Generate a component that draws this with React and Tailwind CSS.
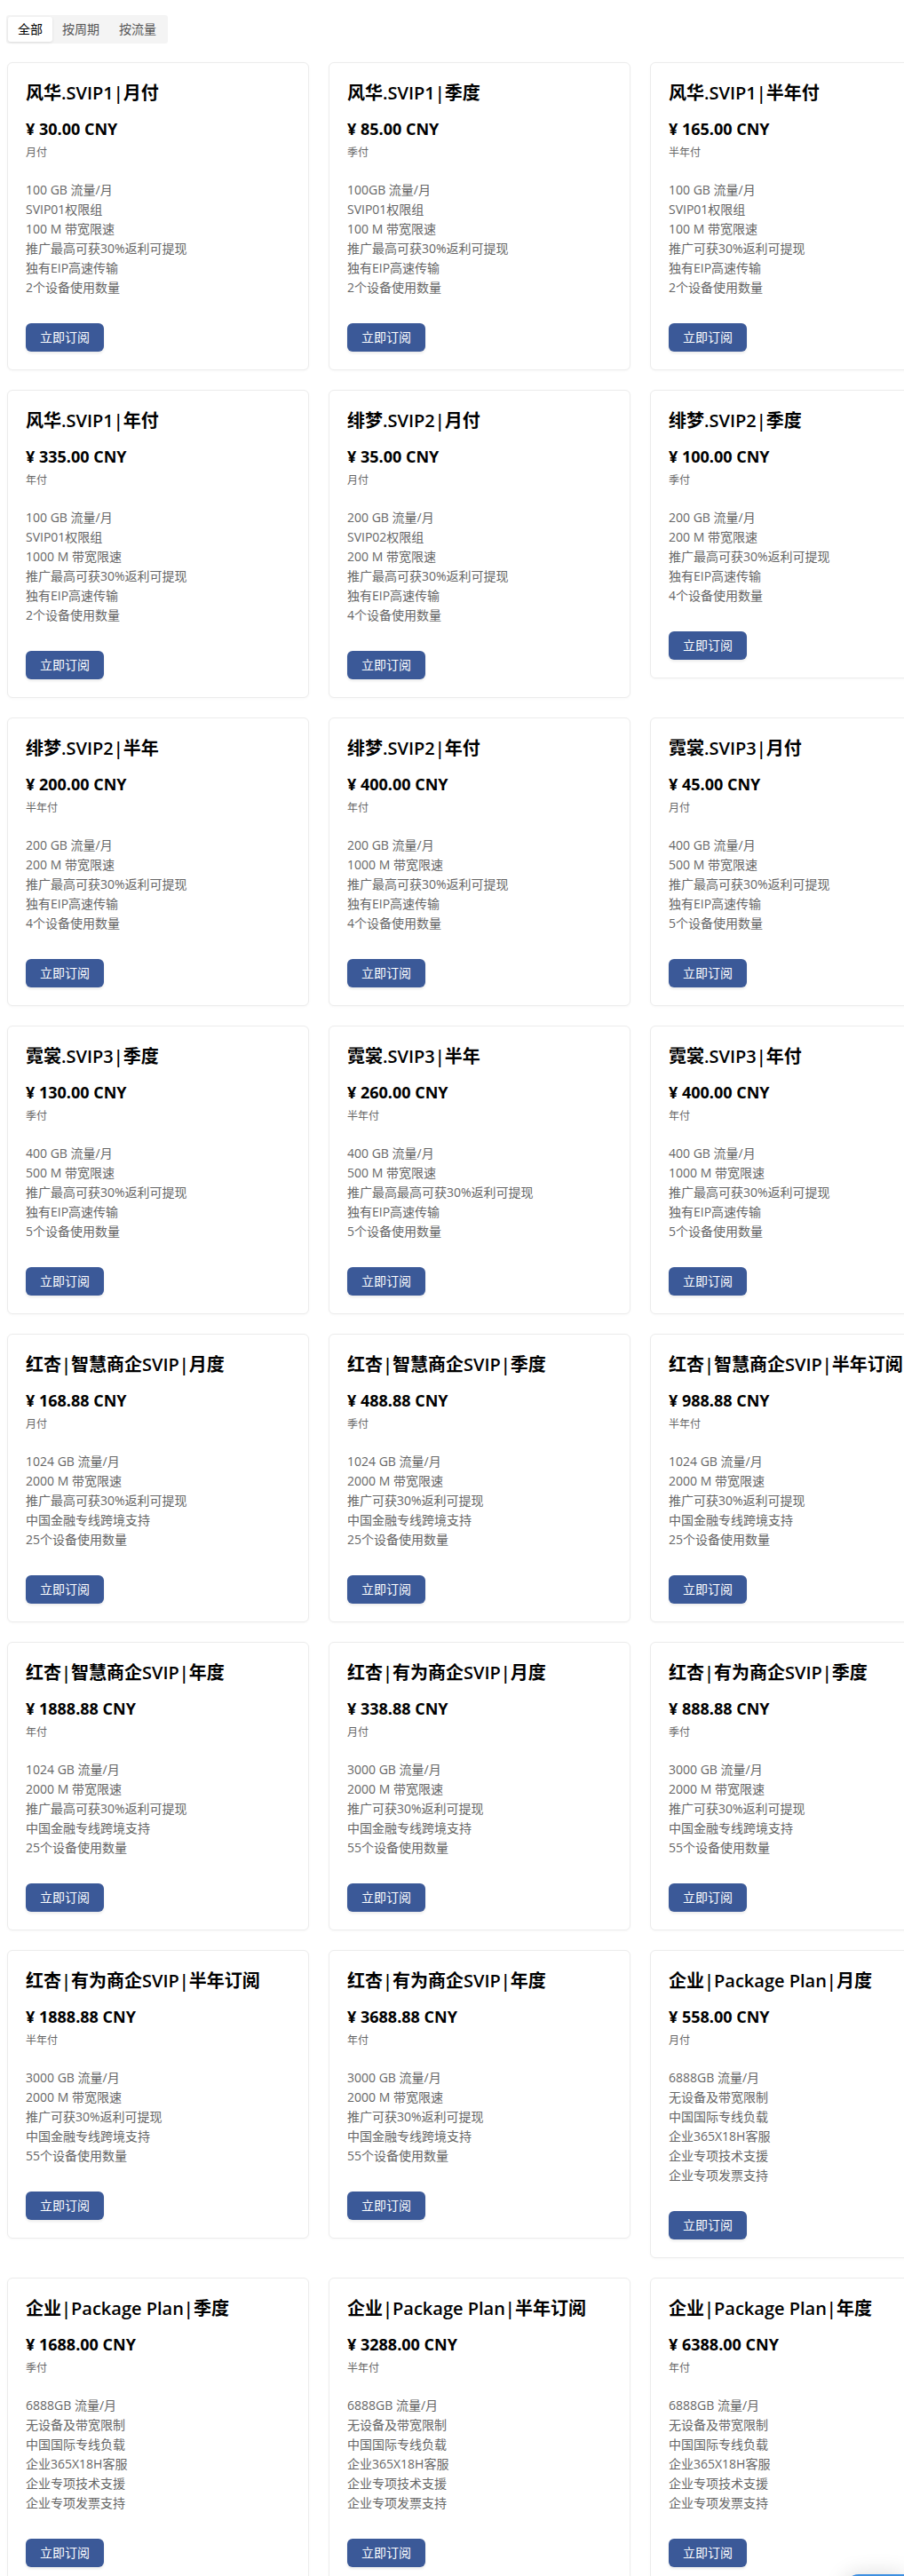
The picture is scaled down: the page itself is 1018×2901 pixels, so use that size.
import { useState } from 'react'

const svip1 = ['SVIP01权限组']
const plans = [
  {
    name: '风华.SVIP1|月付', price: '30.00', cycle: '月付',
    features: ['100 GB 流量/月', ...svip1, '100 M 带宽限速', '推广最高可获30%返利可提现', '独有EIP高速传输', '2个设备使用数量']
  },
  {
    name: '风华.SVIP1|季度', price: '85.00', cycle: '季付',
    features: ['100GB 流量/月', ...svip1, '100 M 带宽限速', '推广最高可获30%返利可提现', '独有EIP高速传输', '2个设备使用数量']
  },
  {
    name: '风华.SVIP1|半年付', price: '165.00', cycle: '半年付',
    features: ['100 GB 流量/月', ...svip1, '100 M 带宽限速', '推广可获30%返利可提现', '独有EIP高速传输', '2个设备使用数量']
  },
  {
    name: '风华.SVIP1|年付', price: '335.00', cycle: '年付',
    features: ['100 GB 流量/月', ...svip1, '1000 M 带宽限速', '推广最高可获30%返利可提现', '独有EIP高速传输', '2个设备使用数量']
  },
  {
    name: '绯梦.SVIP2|月付', price: '35.00', cycle: '月付',
    features: ['200 GB 流量/月', 'SVIP02权限组', '200 M 带宽限速', '推广最高可获30%返利可提现', '独有EIP高速传输', '4个设备使用数量']
  },
  {
    name: '绯梦.SVIP2|季度', price: '100.00', cycle: '季付',
    features: ['200 GB 流量/月', '200 M 带宽限速', '推广最高可获30%返利可提现', '独有EIP高速传输', '4个设备使用数量']
  },
  {
    name: '绯梦.SVIP2|半年', price: '200.00', cycle: '半年付',
    features: ['200 GB 流量/月', '200 M 带宽限速', '推广最高可获30%返利可提现', '独有EIP高速传输', '4个设备使用数量']
  },
  {
    name: '绯梦.SVIP2|年付', price: '400.00', cycle: '年付',
    features: ['200 GB 流量/月', '1000 M 带宽限速', '推广最高可获30%返利可提现', '独有EIP高速传输', '4个设备使用数量']
  },
  {
    name: '霓裳.SVIP3|月付', price: '45.00', cycle: '月付',
    features: ['400 GB 流量/月', '500 M 带宽限速', '推广最高可获30%返利可提现', '独有EIP高速传输', '5个设备使用数量']
  },
  {
    name: '霓裳.SVIP3|季度', price: '130.00', cycle: '季付',
    features: ['400 GB 流量/月', '500 M 带宽限速', '推广最高可获30%返利可提现', '独有EIP高速传输', '5个设备使用数量']
  },
  {
    name: '霓裳.SVIP3|半年', price: '260.00', cycle: '半年付',
    features: ['400 GB 流量/月', '500 M 带宽限速', '推广最高最高可获30%返利可提现', '独有EIP高速传输', '5个设备使用数量']
  },
  {
    name: '霓裳.SVIP3|年付', price: '400.00', cycle: '年付',
    features: ['400 GB 流量/月', '1000 M 带宽限速', '推广最高可获30%返利可提现', '独有EIP高速传输', '5个设备使用数量']
  },
  {
    name: '红杏|智慧商企SVIP|月度', price: '168.88', cycle: '月付',
    features: ['1024 GB 流量/月', '2000 M 带宽限速', '推广最高可获30%返利可提现', '中国金融专线跨境支持', '25个设备使用数量']
  },
  {
    name: '红杏|智慧商企SVIP|季度', price: '488.88', cycle: '季付',
    features: ['1024 GB 流量/月', '2000 M 带宽限速', '推广可获30%返利可提现', '中国金融专线跨境支持', '25个设备使用数量']
  },
  {
    name: '红杏|智慧商企SVIP|半年订阅', price: '988.88', cycle: '半年付',
    features: ['1024 GB 流量/月', '2000 M 带宽限速', '推广可获30%返利可提现', '中国金融专线跨境支持', '25个设备使用数量']
  },
  {
    name: '红杏|智慧商企SVIP|年度', price: '1888.88', cycle: '年付',
    features: ['1024 GB 流量/月', '2000 M 带宽限速', '推广最高可获30%返利可提现', '中国金融专线跨境支持', '25个设备使用数量']
  },
  {
    name: '红杏|有为商企SVIP|月度', price: '338.88', cycle: '月付',
    features: ['3000 GB 流量/月', '2000 M 带宽限速', '推广可获30%返利可提现', '中国金融专线跨境支持', '55个设备使用数量']
  },
  {
    name: '红杏|有为商企SVIP|季度', price: '888.88', cycle: '季付',
    features: ['3000 GB 流量/月', '2000 M 带宽限速', '推广可获30%返利可提现', '中国金融专线跨境支持', '55个设备使用数量']
  },
  {
    name: '红杏|有为商企SVIP|半年订阅', price: '1888.88', cycle: '半年付',
    features: ['3000 GB 流量/月', '2000 M 带宽限速', '推广可获30%返利可提现', '中国金融专线跨境支持', '55个设备使用数量']
  },
  {
    name: '红杏|有为商企SVIP|年度', price: '3688.88', cycle: '年付',
    features: ['3000 GB 流量/月', '2000 M 带宽限速', '推广可获30%返利可提现', '中国金融专线跨境支持', '55个设备使用数量']
  },
]

// enterprise plans share one feature list
const enterprise = ['6888GB 流量/月', '无设备及带宽限制', '中国国际专线负载', '企业365X18H客服', '企业专项技术支援', '企业专项发票支持']
;[
  ['月度', '558.00', '月付'],
  ['季度', '1688.00', '季付'],
  ['半年订阅', '3288.00', '半年付'],
  ['年度', '6388.00', '年付'],
].forEach(([term, price, cycle]) => {
  plans.push({ name: `企业|Package Plan|${term}`, price, cycle, features: enterprise })
})

const tabs = ['全部', '按周期', '按流量']

function PlanCard({ plan }) {
  return (
    <div className="rounded-md border border-[#ececec] bg-white p-5 shadow-[0_1px_3px_rgba(0,0,0,0.03)]">
      <h3 className="text-[20px] leading-7 font-semibold text-black">{plan.name}</h3>
      <div className="mt-[14px] text-[18px] leading-6 font-bold text-black">¥ {plan.price} CNY</div>
      <div className="mt-1.5 text-xs leading-[18px] text-[#666]">{plan.cycle}</div>
      <div className="mt-[22px] text-sm leading-[22px] text-[#666]">
        {plan.features.map((f, i) => (
          <div key={i}>{f}</div>
        ))}
      </div>
      <button className="mt-[29px] h-8 rounded-md bg-[#3b5998] px-4 text-sm text-white shadow-[0_2px_3px_rgba(0,0,0,0.08)]">
        立即订阅
      </button>
    </div>
  )
}

export default function App() {
  const [tab, setTab] = useState(0)

  return (
    <div className="relative h-screen overflow-hidden bg-white pt-[17px] pl-[7px] [font-family:'Open_Sans','Noto_Sans_CJK_SC',sans-serif]">
      {/* Filter tabs */}
      <div className="inline-flex rounded-[3px] bg-[#f4f4f4] p-[2px]">
        {tabs.map((t, i) => (
          <button
            key={t}
            onClick={() => setTab(i)}
            className={`h-7 rounded-[3px] px-[11px] text-sm leading-7 ${
              tab === i ? 'bg-white text-black shadow-[0_1px_3px_rgba(0,0,0,0.1)]' : 'text-[#555]'
            }`}
          >
            {t}
          </button>
        ))}
      </div>

      {/* Plan grid */}
      <div className="mt-[21px] ml-px grid grid-cols-[repeat(3,340px)] items-start gap-[22px]">
        {plans.map((p) => (
          <PlanCard key={p.name} plan={p} />
        ))}
      </div>

      {/* Floating support button peeking at the bottom */}
      <div className="fixed right-0 -bottom-[58px] h-[60px] w-[67px] rounded-tl-2xl bg-[#3d8fe0] shadow-[0_0_24px_rgba(0,0,0,0.15)]" />
    </div>
  )
}
